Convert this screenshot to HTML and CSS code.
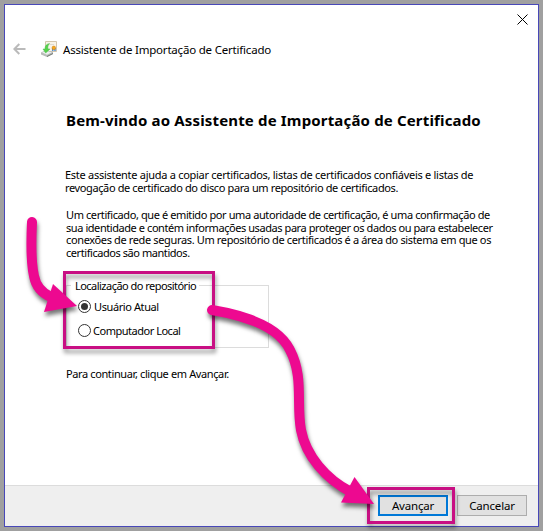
FILE: index.html
```
<!DOCTYPE html>
<html lang="pt">
<head>
<meta charset="utf-8">
<title>Assistente de Importação de Certificado</title>
<link rel="stylesheet" href="styles.css">
</head>
<body>
<div class="window">
  <div class="close-row">
    <svg class="close" viewBox="0 0 11 11"><path d="M.5 .5L10.5 10.5M10.5 .5L.5 10.5"/></svg>
  </div>
  <header class="titlebar">
    <svg class="back" viewBox="0 0 13 12"><path d="M12.500 6H1.500M6.300 1L1.300 6L6.300 11"/></svg>
    <svg class="cert" viewBox="0 0 17 17">
      <path d="M4.500 .5H15.500V10.500H4.500Z" fill="#f8f3e8" stroke="#d3c5ae"/>
      <path d="M6.500 3.500H13" stroke="#dedbd3"/>
      <path d="M0 11.500L5 9L12 11V13L6 16L0 13.500Z" fill="#b8bbb9"/>
      <path d="M1 11.500L5 10L11 11.300L6 13.800Z" fill="#eceeed"/>
      <path d="M6 15.500L12 12.500" stroke="#747a76"/>
      <path d="M8.500 2.500C5.500 3 3.800 5 4 8H2L4.700 12L9 8H7C6.500 5.800 7 4 8.500 2.500Z" fill="#55d34a" stroke="#4fbd50" stroke-width=".5"/>
      <path d="M11.700 7V10M14 7V10" stroke="#4c8fd2" stroke-width="1.500"/>
      <circle cx="12.800" cy="6.900" r="1.800" fill="#f6a719" stroke="#ce7b12" stroke-width=".5"/>
    </svg>
    <span class="title">Assistente de Importação de Certificado</span>
  </header>
  <main class="content">
    <h1 class="heading">Bem-vindo ao Assistente de Importação de Certificado</h1>
    <p class="intro"><span class="line l1">Este assistente ajuda a copiar certificados, listas de certificados confiáveis e listas de</span><span class="line l2">revogação de certificado do disco para um repositório de certificados.</span></p>
    <p class="about"><span class="line l3">Um certificado, que é emitido por uma autoridade de certificação, é uma confirmação de</span><span class="line l4">sua identidade e contém informações usadas para proteger os dados ou para estabelecer</span><span class="line l5">conexões de rede seguras. Um repositório de certificados é a área do sistema em que os</span><span class="line l6">certificados são mantidos.</span></p>
    <div class="store">
      <div class="legend"><span>Localização do repositório</span></div>
      <div class="option user"><i class="radio checked"></i><span>Usuário Atual</span></div>
      <div class="option computer"><i class="radio"></i><span>Computador Local</span></div>
    </div>
    <p class="continue"><span>Para continuar, clique em Avançar.</span></p>
  </main>
  <footer class="footer">
    <div class="button primary"><span>Avançar</span></div>
    <div class="button cancel"><span>Cancelar</span></div>
  </footer>
</div>
<svg class="annotations" viewBox="0 0 543 531">
  <g class="frame"><rect x="64.500" y="272.500" width="149" height="75"/><rect x="368.500" y="488.500" width="85" height="34"/></g>
  <g class="arrow">
    <path class="shaft" d="M32 222C31 243 31 263 34 276C36 287 42 293 51 297"/>
    <path class="head" d="M53 284L77 306L44 312Z"/>
    <path class="shaft" d="M212 310C248 316 279 327 290 350C304 377 296 403 301 430C306 456 326 479 351 492"/>
    <path class="head" d="M354.500 477L374 504L341 502.500Z"/>
  </g>
</svg>
</body>
</html>
```
FILE: styles.css
```
* { box-sizing: border-box; }
body {
  margin: 0;
  width: 543px;
  height: 531px;
  padding: 4px;
  overflow: hidden;
  background: #a0a0a0;
  color: #000;
  font: 11.5px/13px "Noto Sans", "Open Sans", sans-serif;
}
h1, p { margin: 0; }
.window {
  display: flex;
  flex-direction: column;
  width: 535px;
  height: 523px;
  border: 1px solid #4848b8;
  background: #fff;
}
.close-row { display: flex; justify-content: flex-end; height: 35px; padding: 9px 10px 0 0; }
.close { width: 11px; height: 11px; fill: none; stroke: #000; stroke-width: 1; }
.titlebar { display: flex; align-items: flex-start; height: 24px; padding-left: 8px; }
.back { width: 13px; height: 12px; margin-top: 3px; fill: none; stroke: #bababa; stroke-width: 2; }
.cert { width: 17px; height: 17px; margin: 1px 0 0 15px; fill: none; }
.title { margin: 3px 0 0 5px; white-space: nowrap; letter-spacing: -.2px; }
.content { flex: 1; padding: 46px 0 0 61px; white-space: nowrap; font-size: 11px; }
.heading { height: 58px; font-size: 15px; line-height: 20px; font-weight: 700; letter-spacing: .16px; }
.line { display: block; width: max-content; }
.intro { height: 41px; margin-left: -1px; }
.about { height: 68px; line-height: 12.7px; }
.l1 { letter-spacing: -.28px; }
.l2 { letter-spacing: -.38px; }
.l3 { letter-spacing: -.4px; }
.l4 { letter-spacing: -.43px; }
.l5 { letter-spacing: -.36px; }
.l6 { letter-spacing: -.44px; }
.store { width: 203px; height: 63px; margin-top: 8px; border: 1px solid #dcdcdc; }
.legend { width: max-content; height: 13px; margin: -7px 0 0 4px; padding: 0 3px 0 4px; background: #fff; }
.legend span { letter-spacing: -.53px; }
.option span { letter-spacing: -.48px; }
.user span { letter-spacing: -.4px; }
.continue span { letter-spacing: -.38px; }
.option { display: flex; align-items: center; height: 13px; margin: 8px 0 0 11px; }
.option + .option { margin-top: 11px; }
.radio { display: flex; align-items: center; justify-content: center; width: 13px; height: 13px; border: 1px solid #333; border-radius: 50%; }
.checked::after { content: ""; width: 7px; height: 7px; border-radius: 50%; background: #333; }
.user span { margin-left: 3px; }
.computer span { margin-left: 2px; }
.continue { margin-top: 19px; }
.footer { display: flex; gap: 9px; height: 41px; padding: 9px 11px 0 0; justify-content: flex-end; border-top: 1px solid #dcdcdc; background: #efefef; }
.button { width: 70px; height: 21px; border: 1px solid #adadad; background: #e1e1e1; text-align: center; line-height: 20px; }
.primary { border: 2px solid #0078d7; line-height: 18px; }
.button span { letter-spacing: -.2px; }
.annotations { position: absolute; left: 0; top: 0; width: 543px; height: 531px; fill: none; }
.frame { stroke: #c80f83; stroke-width: 3; filter: drop-shadow(1px 4px 2px #0006); }
.arrow { filter: drop-shadow(1px 4px 2px #0008); }
.shaft { stroke: #ed0990; stroke-width: 10; stroke-linecap: round; }
.head { fill: #ed0990; }
```
